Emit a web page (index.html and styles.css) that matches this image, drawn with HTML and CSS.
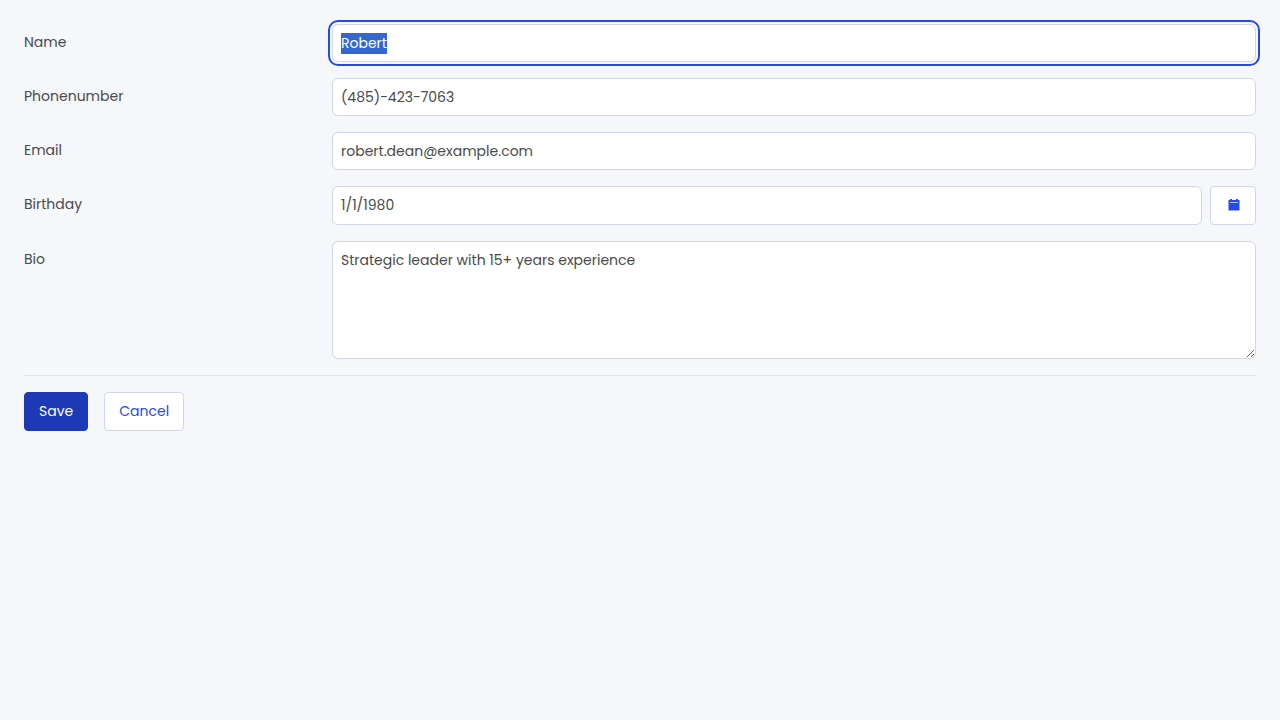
FILE: index.html
```
<!DOCTYPE html>
<html lang="en">
<head>
<meta charset="utf-8">
<meta name="viewport" content="width=device-width, initial-scale=1">
<title>Edit profile</title>
<link rel="stylesheet" href="styles.css">
</head>
<body>
<form class="form">
  <div class="field">
    <label class="label" for="name">Name</label>
    <input class="control" id="name" type="text" value="Robert" autocomplete="off">
  </div>
  <div class="field">
    <label class="label" for="phone">Phonenumber</label>
    <input class="control" id="phone" type="tel" value="(485)-423-7063">
  </div>
  <div class="field">
    <label class="label" for="email">Email</label>
    <input class="control" id="email" type="email" value="robert.dean@example.com">
  </div>
  <div class="field">
    <label class="label" for="birthday">Birthday</label>
    <div class="date">
      <input class="control" id="birthday" type="text" value="1/1/1980">
      <button class="button button-icon" type="button" aria-label="Open calendar">
        <svg class="icon" viewBox="0 0 12 12" aria-hidden="true">
          <path fill="currentColor" d="M2 0h2v1h4V0h2v1h1.500v10.500h-11V1H2z"/>
          <path fill="#aebcf6" d="M2 3h8v1H2z"/>
        </svg>
      </button>
    </div>
  </div>
  <div class="field">
    <label class="label" for="bio">Bio</label>
    <textarea class="control bio" id="bio" spellcheck="false">Strategic leader with 15+ years experience</textarea>
  </div>
  <div class="actions">
    <button class="button button-primary" type="submit">Save</button>
    <button class="button" type="button">Cancel</button>
  </div>
</form>
<script src="form.js"></script>
</body>
</html>
```
FILE: styles.css
```
* {
  box-sizing: border-box;
}

body {
  margin: 0;
  background: #f5f7fb;
  color: #4a4a4a;
  font: 14px/20px Poppins, Inter, sans-serif;
}

.form {
  display: flex;
  flex-direction: column;
  gap: 16px;
  padding: 24px;
}

.field {
  display: grid;
  grid-template-columns: 1fr 3fr;
  align-items: start;
}

.label {
  padding: 8px 16px 8px 0;
}

.control {
  display: block;
  width: 100%;
  min-width: 0;
  height: 38px;
  margin: 0;
  padding: 8px;
  border: 1px solid #d3d6ea;
  border-radius: 6px;
  background: #fff;
  color: inherit;
  font: inherit;
}

.control:focus {
  outline: 2px solid #264ae5;
  outline-offset: 2px;
}

.control::selection {
  background: rgba(51, 103, 209, 0.996);
  color: #fff;
}

.date {
  display: flex;
  gap: 8px;
}

.date .control {
  flex: 1;
  height: 39px;
}

.bio {
  height: 118px;
  resize: vertical;
}

.actions {
  display: flex;
  gap: 16px;
  padding-top: 16px;
  border-top: 1px solid #e2e5f0;
}

.button {
  display: flex;
  align-items: center;
  justify-content: center;
  height: 39px;
  margin: 0;
  padding: 0 14px 2px;
  border: 1px solid #d3d6ea;
  border-radius: 4px;
  background: #fff;
  color: #264ae5;
  font: inherit;
  cursor: pointer;
}

.button-primary {
  border-color: #1d39b5;
  background: #1d39b5;
  color: #fff;
}

.button-icon {
  width: 46px;
  padding: 0 14px 2px 16px;
}

.icon {
  flex: none;
  width: 12px;
  height: 12px;
}
```
FILE: form.js
```
const nameInput = document.getElementById("name");
nameInput.focus();
nameInput.select();
```
